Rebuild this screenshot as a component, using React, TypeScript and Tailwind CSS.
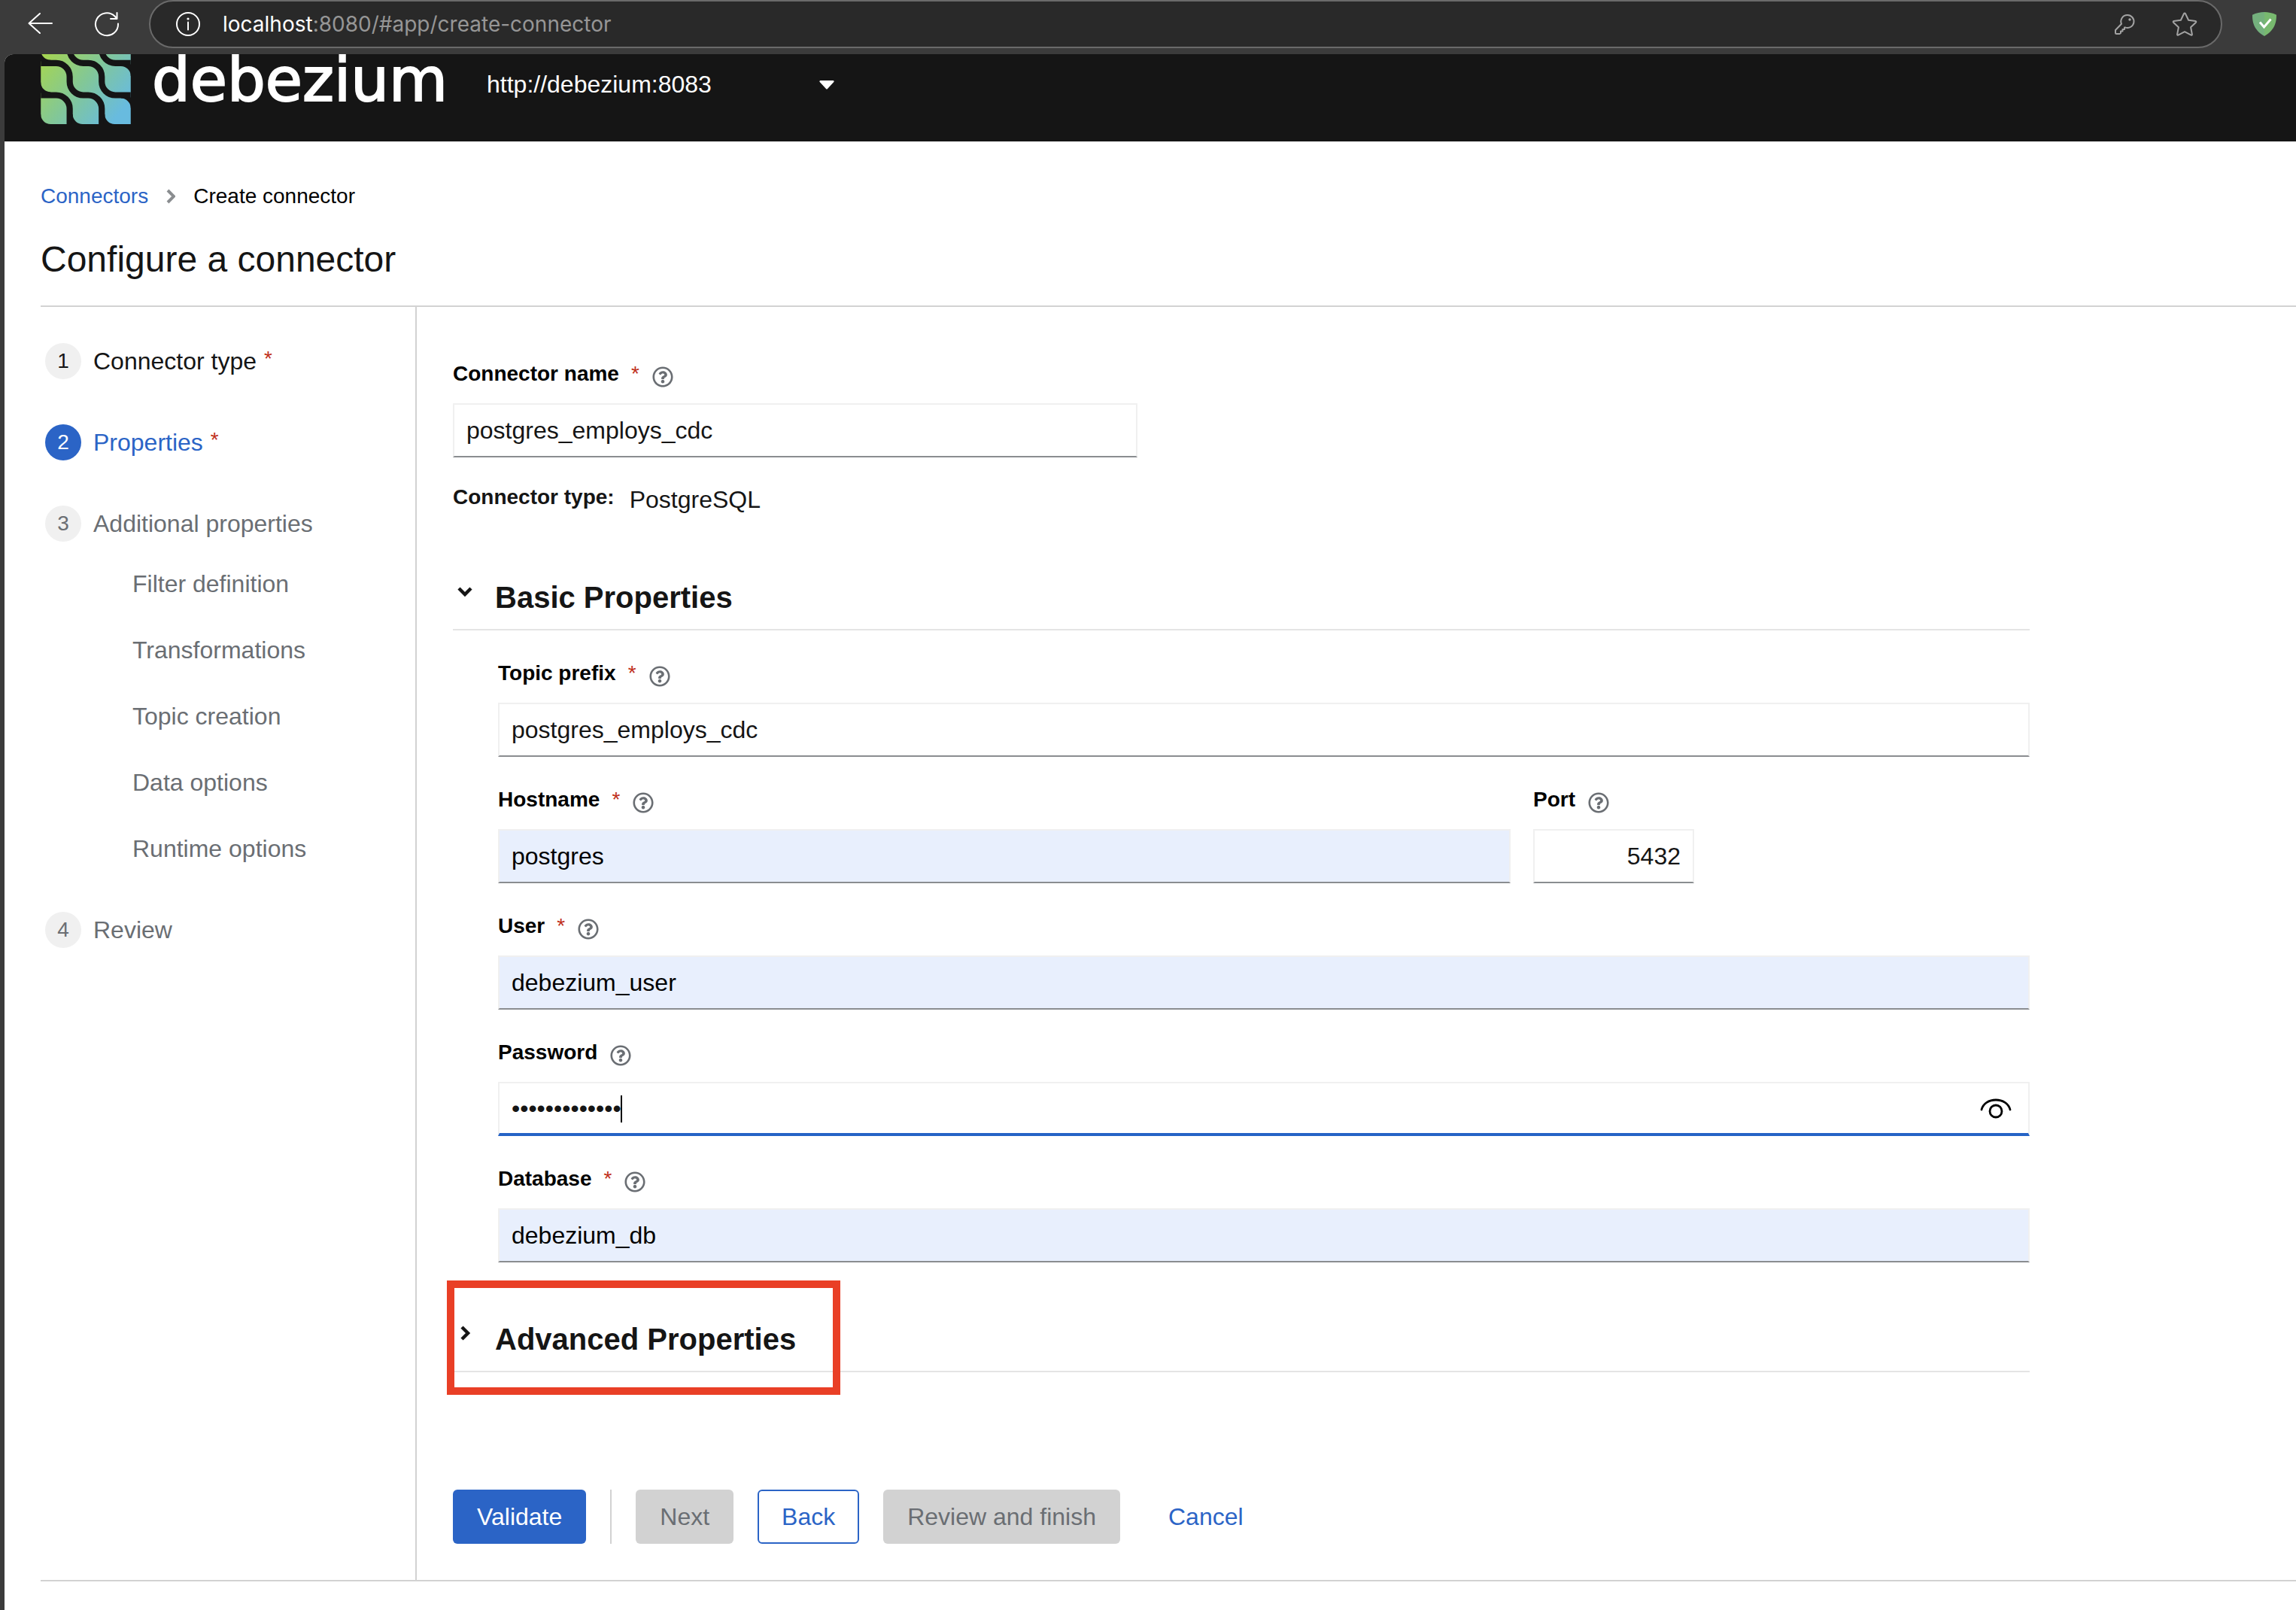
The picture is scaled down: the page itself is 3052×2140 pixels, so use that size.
import React from "react";

function HelpIcon() {
  return (
    <svg viewBox="0 0 512 512" className="size-7" fill="currentColor" aria-hidden="true">
      <path d="M256 8C119 8 8 119 8 256s111 248 248 248 248-111 248-248S393 8 256 8zm0 448c-110.500 0-200-89.400-200-200 0-110.500 89.500-200 200-200 110.500 0 200 89.500 200 200 0 110.500-89.400 200-200 200zm107.200-255.200c0 67.100-72.400 68.100-72.400 92.900V300c0 6.600-5.400 12-12 12h-45.600c-6.600 0-12-5.400-12-12v-8.700c0-35.700 27.100-50 47.600-61.500 17.600-9.800 28.300-16.500 28.300-29.500 0-17.200-22-28.700-39.800-28.700-23.200 0-33.900 11-48.900 30-4 5.100-11.500 6.100-16.700 2.100l-27.800-21.100c-5.100-3.900-6.300-11.100-2.600-16.400C184.800 131.500 214.900 112 261.800 112c49.100 0 101.500 38.300 101.500 88.800zM298 368c0 23.200-18.800 42-42 42s-42-18.800-42-42 18.800-42 42-42 42 18.800 42 42z" />
    </svg>
  );
}

function Angle({ open }: { open: boolean }) {
  return (
    <svg viewBox="0 0 32 32" className="size-8" fill="none" stroke="currentColor" strokeWidth="4.500" aria-hidden="true">
      <path d={open ? "M8 12l8 8 8-8" : "M12 8l8 8-8 8"} />
    </svg>
  );
}

function LogoMark() {
  return (
    <svg viewBox="0 26.500 119.500 93" className="h-[93px] w-[120px] shrink-0" aria-hidden="true">
      <defs>
        <linearGradient id="mark" gradientUnits="userSpaceOnUse" x1="6" y1="26" x2="105" y2="105">
          <stop offset="0" stopColor="#a5d552" />
          <stop offset="0.500" stopColor="#82c797" />
          <stop offset="1" stopColor="#68bbdf" />
        </linearGradient>
      </defs>
      <rect width="119.500" height="119.500" fill="url(#mark)" />
      <g fill="none" stroke="#151515" strokeWidth="8.200">
        <path d="M0 81H20.400A18 18 0 0 1 38.400 99V119.500" />
        <path d="M0 38.400H20.400A18 18 0 0 1 38.400 56.400V63A18 18 0 0 0 56.400 81H63A18 18 0 0 1 81 99V119.500" />
        <path d="M38.400 0V20.400A18 18 0 0 0 56.400 38.400H63A18 18 0 0 1 81 56.400V63A18 18 0 0 0 99 81H119.500" />
        <path d="M81 0V20.400A18 18 0 0 0 99 38.400H119.500" />
      </g>
      <g fill="#151515">
        <path d="M0 21.300A13 13 0 0 0 13 34.300V36H-1V21.300Z" />
        <path d="M0 63.900A13 13 0 0 0 13 76.900V78H-1V63.900Z" />
        <path d="M0 106.500A13 13 0 0 0 13 119.500V120H-1V106.500Z" />
        <path d="M42.500 106.500A13 13 0 0 0 55.500 119.500V120H40V106.500Z" />
        <path d="M85.100 106.500A13 13 0 0 0 98.100 119.500V120H83V106.500Z" />
        <path d="M106.500 42.500A13 13 0 0 1 119.500 55.500H120V40H106.500Z" />
        <path d="M106.500 85.100A13 13 0 0 1 119.500 98.100H120V84H106.500Z" />
      </g>
    </svg>
  );
}

function BrowserBar() {
  return (
    <div className="flex h-[72px] items-start bg-[#3b3b3b] pr-[26px] pl-9 text-white">
      <button aria-label="Back" className="mt-3.5 size-9">
        <svg viewBox="0 0 36 36" className="size-9" fill="none" stroke="currentColor" strokeWidth="2" strokeLinecap="round" strokeLinejoin="round">
          <path d="M33 17H2.500M17 4L2.500 17L17 30" />
        </svg>
      </button>
      <button aria-label="Reload" className="mt-3.5 ml-[52px] size-9">
        <svg viewBox="0 0 36 36" className="size-9" fill="none" stroke="currentColor" strokeWidth="2" strokeLinecap="round" strokeLinejoin="round">
          <path d="M33 17.500A15 15 0 1 1 28.500 7.500L31.500 11M31.500 3V11H23" />
        </svg>
      </button>
      <div className="ml-[38px] flex h-16 flex-1 items-center rounded-full border-2 border-[#6a6a6a] bg-[#292929] pr-[30px] pl-8">
        <svg viewBox="0 0 36 36" className="size-9" fill="none" stroke="currentColor" strokeWidth="2" aria-hidden="true">
          <circle cx="18" cy="18" r="15" />
          <path d="M18 15.500V25.500" strokeLinecap="round" />
          <circle cx="18" cy="11" r="1.600" fill="currentColor" stroke="none" />
        </svg>
        <div className="ml-7 flex-1 font-[Inter,sans-serif] text-[28px] leading-[40px] text-[#969696]">
          <span className="text-white">localhost</span>:8080/#app/create-connector
        </div>
        <button aria-label="Passwords" className="text-[#a3a3a3]">
          <svg viewBox="0 0 32 32" className="size-8" fill="none" stroke="currentColor" strokeWidth="2" strokeLinejoin="round">
            <path d="M20 4a8.500 8.500 0 1 1-2.600 16.600L16 20.500V23h-2.500v2.500H11V28L9.500 29H5.500A1.500 1.500 0 0 1 4 27.500V24L12 15.800A8.500 8.500 0 0 1 20 4Z" />
            <circle cx="23" cy="10" r="1.700" fill="currentColor" stroke="none" />
          </svg>
        </button>
        <button aria-label="Add to favorites" className="ml-[46px] text-[#a3a3a3]">
          <svg viewBox="0 0 36 36" className="size-9" fill="none" stroke="currentColor" strokeWidth="2" strokeLinejoin="round">
            <path d="M18 3.500a1 1 0 0 1 .9.500l4.200 8.800 9.300 1.200a1 1 0 0 1 .6 1.700l-6.900 6.600 1.800 9.500a.9.900 0 0 1-1.300.9L18 28.200l-8.600 4.500a.9.900 0 0 1-1.300-.9l1.800-9.500L3 15.700a1 1 0 0 1 .6-1.700l9.300-1.200L17.100 4a1 1 0 0 1 .9-.5Z" />
          </svg>
        </button>
      </div>
      <button aria-label="Ad blocker" className="mt-4 ml-10">
        <svg viewBox="0 0 32 32" className="size-8">
          <path d="M16 0C11 0 5 1.200 0 3.800 0 9.400-.1 23.400 16 32Z" fill="#74b07d" />
          <path d="M16 0c5 0 11 1.200 16 3.800C32 9.400 32.100 23.400 16 32Z" fill="#78b96f" />
          <path d="M10 13.500l5.500 6.500L24.500 9.500" fill="none" stroke="#fff" strokeWidth="3" />
        </svg>
      </button>
    </div>
  );
}

function Masthead() {
  return (
    <header className="flex h-[116px] items-start rounded-tl-[12px] bg-[#151515] pl-12 text-white">
      <LogoMark />
      <span className="ml-7 w-[400px] font-['DejaVu_Sans',sans-serif] text-[80px] leading-[70px] [-webkit-text-stroke:2px_white]">
        debezium
      </span>
      <div className="relative mt-4 ml-[45px] w-[462px]">
        <select
          aria-label="Kafka Connect cluster"
          className="h-12 w-full appearance-none bg-transparent text-[32px] leading-[48px] text-white"
        >
          <option>http://debezium:8083</option>
        </select>
        <svg viewBox="0 0 20 12" className="pointer-events-none absolute top-[19px] right-0 h-3 w-5" fill="currentColor" aria-hidden="true">
          <path d="M1.500 0H18.500a1.200 1.200 0 0 1 .8 2L11 11a1.300 1.300 0 0 1-2 0L.7 2A1.200 1.200 0 0 1 1.500 0Z" />
        </svg>
      </div>
    </header>
  );
}

const subSteps = ["Filter definition", "Transformations", "Topic creation", "Data options", "Runtime options"];

function Step({ n, label, required, current, disabled }: { n: number; label: string; required?: boolean; current?: boolean; disabled?: boolean }) {
  const tone = current ? "text-[#2b64c6]" : disabled ? "text-[#6a6e73]" : "text-[#151515]";
  return (
    <button disabled={disabled} className={"flex h-12 items-center text-[32px] leading-[48px] " + tone}>
      <span
        className={
          "flex size-12 items-center justify-center rounded-full text-[28px] " +
          (current ? "bg-[#2b64c6] text-white" : "bg-[#f0f0f0]")
        }
      >
        {n}
      </span>
      <span className="ml-4">{label}</span>
      {required && <span className="ml-2.5 self-start text-[28px] leading-[42px] text-[#c0301c]">*</span>}
    </button>
  );
}

function Sidebar() {
  return (
    <nav aria-label="Wizard steps" className="w-[500px] shrink-0 border-r-2 border-[#d2d2d2] pt-12 pl-1.5">
      <ol className="flex flex-col gap-[60px]">
        <li><Step n={1} label="Connector type" required /></li>
        <li><Step n={2} label="Properties" required current /></li>
        <li>
          <Step n={3} label="Additional properties" disabled />
          <ol className="mt-8 flex flex-col gap-10 pl-[116px]">
            {subSteps.map((s) => (
              <li key={s}>
                <button disabled className="block h-12 text-[32px] leading-[48px] text-[#6a6e73]">{s}</button>
              </li>
            ))}
          </ol>
        </li>
        <li><Step n={4} label="Review" disabled /></li>
      </ol>
    </nav>
  );
}

type FieldProps = {
  id: string;
  label: string;
  value: string;
  required?: boolean;
  filled?: boolean;
  type?: string;
  inputClass?: string;
};

function FieldLabel({ id, label, required }: { id: string; label: string; required?: boolean }) {
  return (
    <div className="flex h-[60px] items-start text-[28px] leading-[42px]">
      <label htmlFor={id} className="flex font-bold text-black">
        {label}
        {required && <span className="ml-4 font-normal text-[#c0301c]">*</span>}
      </label>
      <button aria-label={"More info for " + label} className="mt-[11px] ml-[17px] text-[#6a6e73]">
        <HelpIcon />
      </button>
    </div>
  );
}

function Field({ id, label, value, required, filled, type = "text", inputClass = "w-full" }: FieldProps) {
  return (
    <div>
      <FieldLabel id={id} label={label} required={required} />
      <input
        id={id}
        type={type}
        defaultValue={value}
        className={
          "block h-[72px] rounded-none border-2 border-[#f0f0f0] border-b-[#8a8d90] px-4 text-[32px] leading-[48px] outline-none " +
          (filled ? "bg-[#e8effd] text-black " : "bg-white text-[#151515] ") +
          inputClass
        }
      />
    </div>
  );
}

function PasswordField() {
  return (
    <div>
      <FieldLabel id="password" label="Password" />
      <div className="relative">
        <input
          id="password"
          type="password"
          defaultValue="debezium_pass"
          className="block h-[72px] w-full rounded-none border-2 border-b-4 border-[#f0f0f0] border-b-[#2563c6] bg-white px-4 text-[32px] leading-[48px] text-[#151515] outline-none"
        />
        <span className="absolute top-[18px] left-[163px] h-9 w-0.5 bg-black" />
        <button aria-label="Show password" className="absolute top-3.5 right-[21px]">
          <svg viewBox="0 0 48 40" className="h-10 w-12" fill="none" stroke="#000" strokeWidth="2.800" strokeLinecap="round">
            <path d="M5 23C7 14.500 15 10 24 10S41 14.500 43 23" />
            <circle cx="24" cy="25" r="8" />
          </svg>
        </button>
      </div>
    </div>
  );
}

function SectionHeading({ title, open }: { title: string; open: boolean }) {
  return (
    <h2 className="border-b-2 border-[#e4e4e4] pb-4">
      <button aria-expanded={open} className="flex items-start text-[40px] leading-[52px] font-bold text-[#151515]">
        <span className="mt-0.5 flex size-8 items-start">
          <Angle open={open} />
        </span>
        <span className="ml-6">{title}</span>
      </button>
    </h2>
  );
}

function Main() {
  return (
    <main className="flex-1 px-12 pt-[68px] pb-12">
      <div className="max-w-[2096px]">
        <Field id="name" label="Connector name" value="postgres_employs_cdc" required inputClass="w-full max-w-[910px]" />
        <div className="mt-8 flex items-start text-[#151515]">
          <span className="text-[28px] leading-[42px] font-bold">Connector type:</span>
          <span className="ml-5 text-[32px] leading-[48px]">PostgreSQL</span>
        </div>

        <section className="mt-20">
          <SectionHeading title="Basic Properties" open />
          <div className="flex flex-col gap-9 pt-9 pl-[60px]">
            <Field id="prefix" label="Topic prefix" value="postgres_employs_cdc" required />
            <div className="flex gap-[30px]">
              <div className="flex-1">
                <Field id="host" label="Hostname" value="postgres" required filled />
              </div>
              <div className="w-[660px]">
                <Field id="port" label="Port" value="5432" inputClass="w-[214px] text-right" />
              </div>
            </div>
            <Field id="user" label="User" value="debezium_user" required filled />
            <PasswordField />
            <Field id="db" label="Database" value="debezium_db" required filled />
          </div>
        </section>

        <section className="relative mt-[76px]">
          <SectionHeading title="Advanced Properties" open={false} />
          <div className="pointer-events-none absolute -top-[52px] -left-2 h-[152px] w-[523px] border-[10px] border-[#e93f26]" />
        </section>
      </div>

      <div className="mt-[156px] flex gap-8 text-[32px] leading-[48px]">
        <button className="h-[72px] rounded-md bg-[#2b64c6] px-8 text-white">Validate</button>
        <div className="w-0.5 bg-[#d2d2d2]" />
        <button disabled className="h-[72px] rounded-md bg-[#d2d2d2] px-8 text-[#6a6e73]">Next</button>
        <button className="h-[72px] rounded-md border-2 border-[#2b64c6] px-[30px] text-[#2b64c6]">Back</button>
        <button disabled className="h-[72px] rounded-md bg-[#d2d2d2] px-8 text-[#6a6e73]">Review and finish</button>
        <button className="h-[72px] px-8 text-[#2b64c6]">Cancel</button>
      </div>
    </main>
  );
}

export default function App() {
  return (
    <div className="flex min-h-screen flex-col bg-[#3b3b3b] font-['Liberation_Sans',Arial,sans-serif]">
      <BrowserBar />
      <div className="ml-1.5 flex-1 rounded-tl-[12px] bg-white">
        <Masthead />
        <div className="pt-[52px] pl-12">
          <nav aria-label="Breadcrumb" className="flex items-center text-[28px] leading-[42px]">
            <a href="#connectors" className="text-[#2b64c6]">Connectors</a>
            <svg viewBox="0 0 12 20" className="mx-6 h-5 w-3" fill="none" stroke="#8a8d90" strokeWidth="4" aria-hidden="true">
              <path d="M2 2l8 8-8 8" />
            </svg>
            <span className="text-black">Create connector</span>
          </nav>
          <h1 className="mt-8 text-[48px] leading-[62px] text-[#151515]">Configure a connector</h1>
          <div className="mt-[30px] flex border-y-2 border-[#d2d2d2]">
            <Sidebar />
            <Main />
          </div>
        </div>
      </div>
    </div>
  );
}
